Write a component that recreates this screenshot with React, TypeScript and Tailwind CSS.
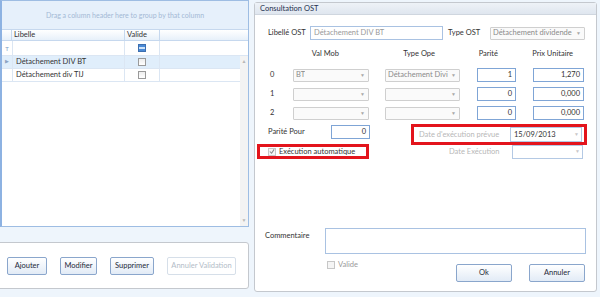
import React from 'react';

const font = "font-['Lato','Open_Sans',sans-serif]";

const Combo: React.FC<{ w: string; value?: string }> = ({ w, value }) => (
    <div className={`${w} h-[13px] border border-[#cfcfcf] bg-[#fafafa] flex items-center justify-between pl-[2px] pr-[3px] rounded-[1px] overflow-hidden`}>
        <span className="text-[#8a8a8a] overflow-hidden whitespace-nowrap leading-none">{value}</span>
        <span className="text-[#a8a8a8] text-[5px] leading-none pl-[3px]">▼</span>
    </div>
);

const Num: React.FC<{ w: string; value: string }> = ({ w, value }) => (
    <div className={`${w} h-[14px] border border-[#7fa5d6] bg-white flex items-center justify-end pr-[3px] text-[#333] leading-none`}>
        {value}
    </div>
);

const Btn: React.FC<{ w: string; label: string; disabled?: boolean }> = ({ w, label, disabled }) => (
    <div
        className={`${w} h-[18px] rounded-[2px] flex items-center justify-center leading-none ${
            disabled
                ? 'border border-[#d6dfe9] bg-white text-[#b3bcc7]'
                : 'border border-[#8aa6cc] bg-gradient-to-b from-white to-[#e2ebf6] text-[#1e2a3a]'
        }`}
    >
        {label}
    </div>
);

const Check: React.FC<{ checked?: boolean; blue?: boolean; dim?: boolean }> = ({ checked, blue, dim }) => (
    <div
        className={`w-[8px] h-[8px] border flex items-center justify-center ${
            blue ? 'border-[#3d6fb0] bg-[#4a8ad6]' : dim ? 'border-[#c7c7c7] bg-[#f5f5f5]' : 'border-[#9a9a9a] bg-gradient-to-b from-[#eeeeee] to-white'
        }`}
    >
        {blue && <div className="w-[6px] h-[2px] bg-[#cfe3f8]" />}
        {checked && (
            <svg width="7" height="7" viewBox="0 0 7 7">
                <path d="M1 3.5 L3 5.5 L6 1" stroke="#8a8a8a" strokeWidth="1.2" fill="none" />
            </svg>
        )}
    </div>
);

const App: React.FC = () => {
    return (
        <div className={`w-[600px] h-[297px] bg-[#eef5fc] flex text-[7.5px] text-[#333] whitespace-nowrap ${font} overflow-hidden`}>
            {/* left side */}
            <div className="w-[249px] flex flex-col">
                <div className="h-[227px] border border-[#9ebde3] border-l-2 border-l-[#8db2e2] bg-white flex flex-col">
                    <div className="h-[28px] bg-[#e6f0fb] flex items-center justify-center text-[#a3b9d5] text-[7px]">
                        Drag a column header here to group by that column
                    </div>
                    <div className="h-[12px] flex bg-gradient-to-b from-white to-[#e7f0fa] border-y border-[#c6d8ee]">
                        <div className="w-[10px] border-r border-[#c6d8ee]" />
                        <div className="w-[113px] border-r border-[#c6d8ee] pl-[2px] flex items-center">Libelle</div>
                        <div className="w-[35px] border-r border-[#c6d8ee] pl-[2px] flex items-center">Valide</div>
                    </div>
                    <div className="h-[15px] flex border-b border-[#dbe6f3]">
                        <div className="w-[10px] flex items-center justify-center text-[#7d9cc4] text-[6px]">T</div>
                        <div className="w-[113px] border-x border-[#dbe6f3]" />
                        <div className="w-[35px] border-r border-[#dbe6f3] flex items-center justify-center"><Check blue /></div>
                    </div>
                    <div className="flex-1 flex">
                        <div className="flex-1 flex flex-col">
                            <div className="h-[13px] flex bg-[#e0eefb] border-b border-[#dbe6f3]">
                                <div className="w-[10px] flex items-center justify-center text-[#8ca3c2] text-[5px]">▶</div>
                                <div className="w-[113px] border-x border-[#dbe6f3] pl-[3px] flex items-center">Détachement DIV BT</div>
                                <div className="w-[35px] border-r border-[#dbe6f3] flex items-center justify-center"><Check /></div>
                            </div>
                            <div className="h-[13px] flex border-b border-[#dbe6f3]">
                                <div className="w-[10px]" />
                                <div className="w-[113px] border-x border-[#dbe6f3] pl-[3px] flex items-center">Détachement div TIJ</div>
                                <div className="w-[35px] border-r border-[#dbe6f3] flex items-center justify-center"><Check /></div>
                            </div>
                        </div>
                        <div className="w-[8px] bg-[#f3f3f3] flex flex-col justify-between items-center py-[3px] text-[#b8b8b8] text-[5px] leading-none">
                            <span>▲</span>
                            <span>▼</span>
                        </div>
                    </div>
                </div>
                <div className="mt-[15px] h-[47px] -ml-[4px] w-[253px] border border-[#c4c8ce] rounded-[3px] bg-white flex items-center gap-[13px] pl-[10px]">
                    <Btn w="w-[40px]" label="Ajouter" />
                    <Btn w="w-[37px]" label="Modifier" />
                    <Btn w="w-[44px]" label="Supprimer" />
                    <Btn w="w-[69px]" label="Annuler Validation" disabled />
                </div>
            </div>

            {/* right panel */}
            <div className="ml-[5px] mt-[2px] w-[343px] h-[290px] border border-[#c4c8ce] rounded-[3px] bg-white flex flex-col">
                <div className="h-[12px] bg-gradient-to-b from-[#eef2f7] to-[#dfe6ef] border-b border-[#cfd6df] pl-[5px] flex items-center text-[#1e3050]">
                    Consultation OST
                </div>
                <div className="mt-[11px] flex items-center h-[14px] pl-[13px]">
                    <span className="w-[42px]">Libellé OST</span>
                    <div className="w-[133px] h-[14px] border border-[#a9c2e2] flex items-center pl-[3px] text-[#999]">Détachement DIV BT</div>
                    <span className="ml-[5px] w-[42px]">Type OST</span>
                    <Combo w="w-[95px]" value="Détachement dividende" />
                </div>
                <div className="mt-[8px] h-[12px] flex items-center">
                    <span className="w-[84px] text-right">Val Mob</span>
                    <span className="w-[96px] text-right">Type Ope</span>
                    <span className="w-[63px] text-right">Parité</span>
                    <span className="w-[75px] text-right">Prix Unitaire</span>
                </div>
                {[
                    ['0', 'BT', 'Détachement Divi', '1', '1,270'],
                    ['1', '', '', '0', '0,000'],
                    ['2', '', '', '0', '0,000'],
                ].map(([n, v, t, p, x], i) => (
                    <div key={n} className={`${i === 0 ? 'mt-[8px]' : 'mt-[5px]'} h-[14px] flex items-center`}>
                        <span className="w-[38px] pl-[15px]">{n}</span>
                        <Combo w="w-[76px]" value={v} />
                        <div className="w-[16px]" />
                        <Combo w="w-[75px]" value={t} />
                        <div className="w-[17px]" />
                        <Num w="w-[39px]" value={p} />
                        <div className="w-[17px]" />
                        <Num w="w-[51px]" value={x} />
                    </div>
                ))}
                <div className="mt-[4px] flex">
                    <div className="flex flex-col">
                        <div className="h-[20px] flex items-start pt-[1px] pl-[13px]">
                            <span className="w-[63px] pt-[1px]">Parité Pour</span>
                            <Num w="w-[39px]" value="0" />
                        </div>
                        <div className="ml-[2px] w-[112px] h-[15px] border-[3px] border-[#e3141c] flex items-center pl-[8px] gap-[3px]">
                            <Check checked dim />
                            <span>Exécution automatique</span>
                        </div>
                    </div>
                    <div className="ml-[41px] flex flex-col">
                        <div className="w-[176px] h-[21px] border-[3px] border-[#e3141c] flex items-center pl-[5px]">
                            <span className="w-[91px] text-[#b7b7b7]">Date d'exécution prévue</span>
                            <div className="w-[72px] h-[15px] border border-[#b4c9e4] bg-white flex items-center justify-between pl-[3px] pr-[2px]">
                                <span>15/09/2013</span>
                                <span className="text-[#c8c8c8] text-[5px]">▼</span>
                            </div>
                        </div>
                        <div className="h-[14px] flex items-center">
                            <span className="w-[101px] pl-[38px] text-[#b7b7b7]">Date Exécution</span>
                            <div className="w-[71px] h-[14px] border border-[#b4c9e4] bg-white flex items-center justify-end pr-[2px]">
                                <span className="text-[#c8c8c8] text-[5px]">▼</span>
                            </div>
                        </div>
                    </div>
                </div>
                <div className="mt-[69px] flex pl-[10px]">
                    <span className="w-[60px] pt-[2px]">Commentaire</span>
                    <div className="w-[261px] h-[26px] border border-[#a9c2e2] bg-white" />
                </div>
                <div className="mt-[4px] flex pl-[72px]">
                    <div className="flex items-center gap-[3px] h-[14px] text-[#9a9a9a]">
                        <Check dim />
                        <span>Valide</span>
                    </div>
                    <div className="ml-[98px] mt-[6px] flex gap-[17px]">
                        <Btn w="w-[56px]" label="Ok" />
                        <Btn w="w-[56px]" label="Annuler" />
                    </div>
                </div>
            </div>
        </div>
    );
};

export default App;
